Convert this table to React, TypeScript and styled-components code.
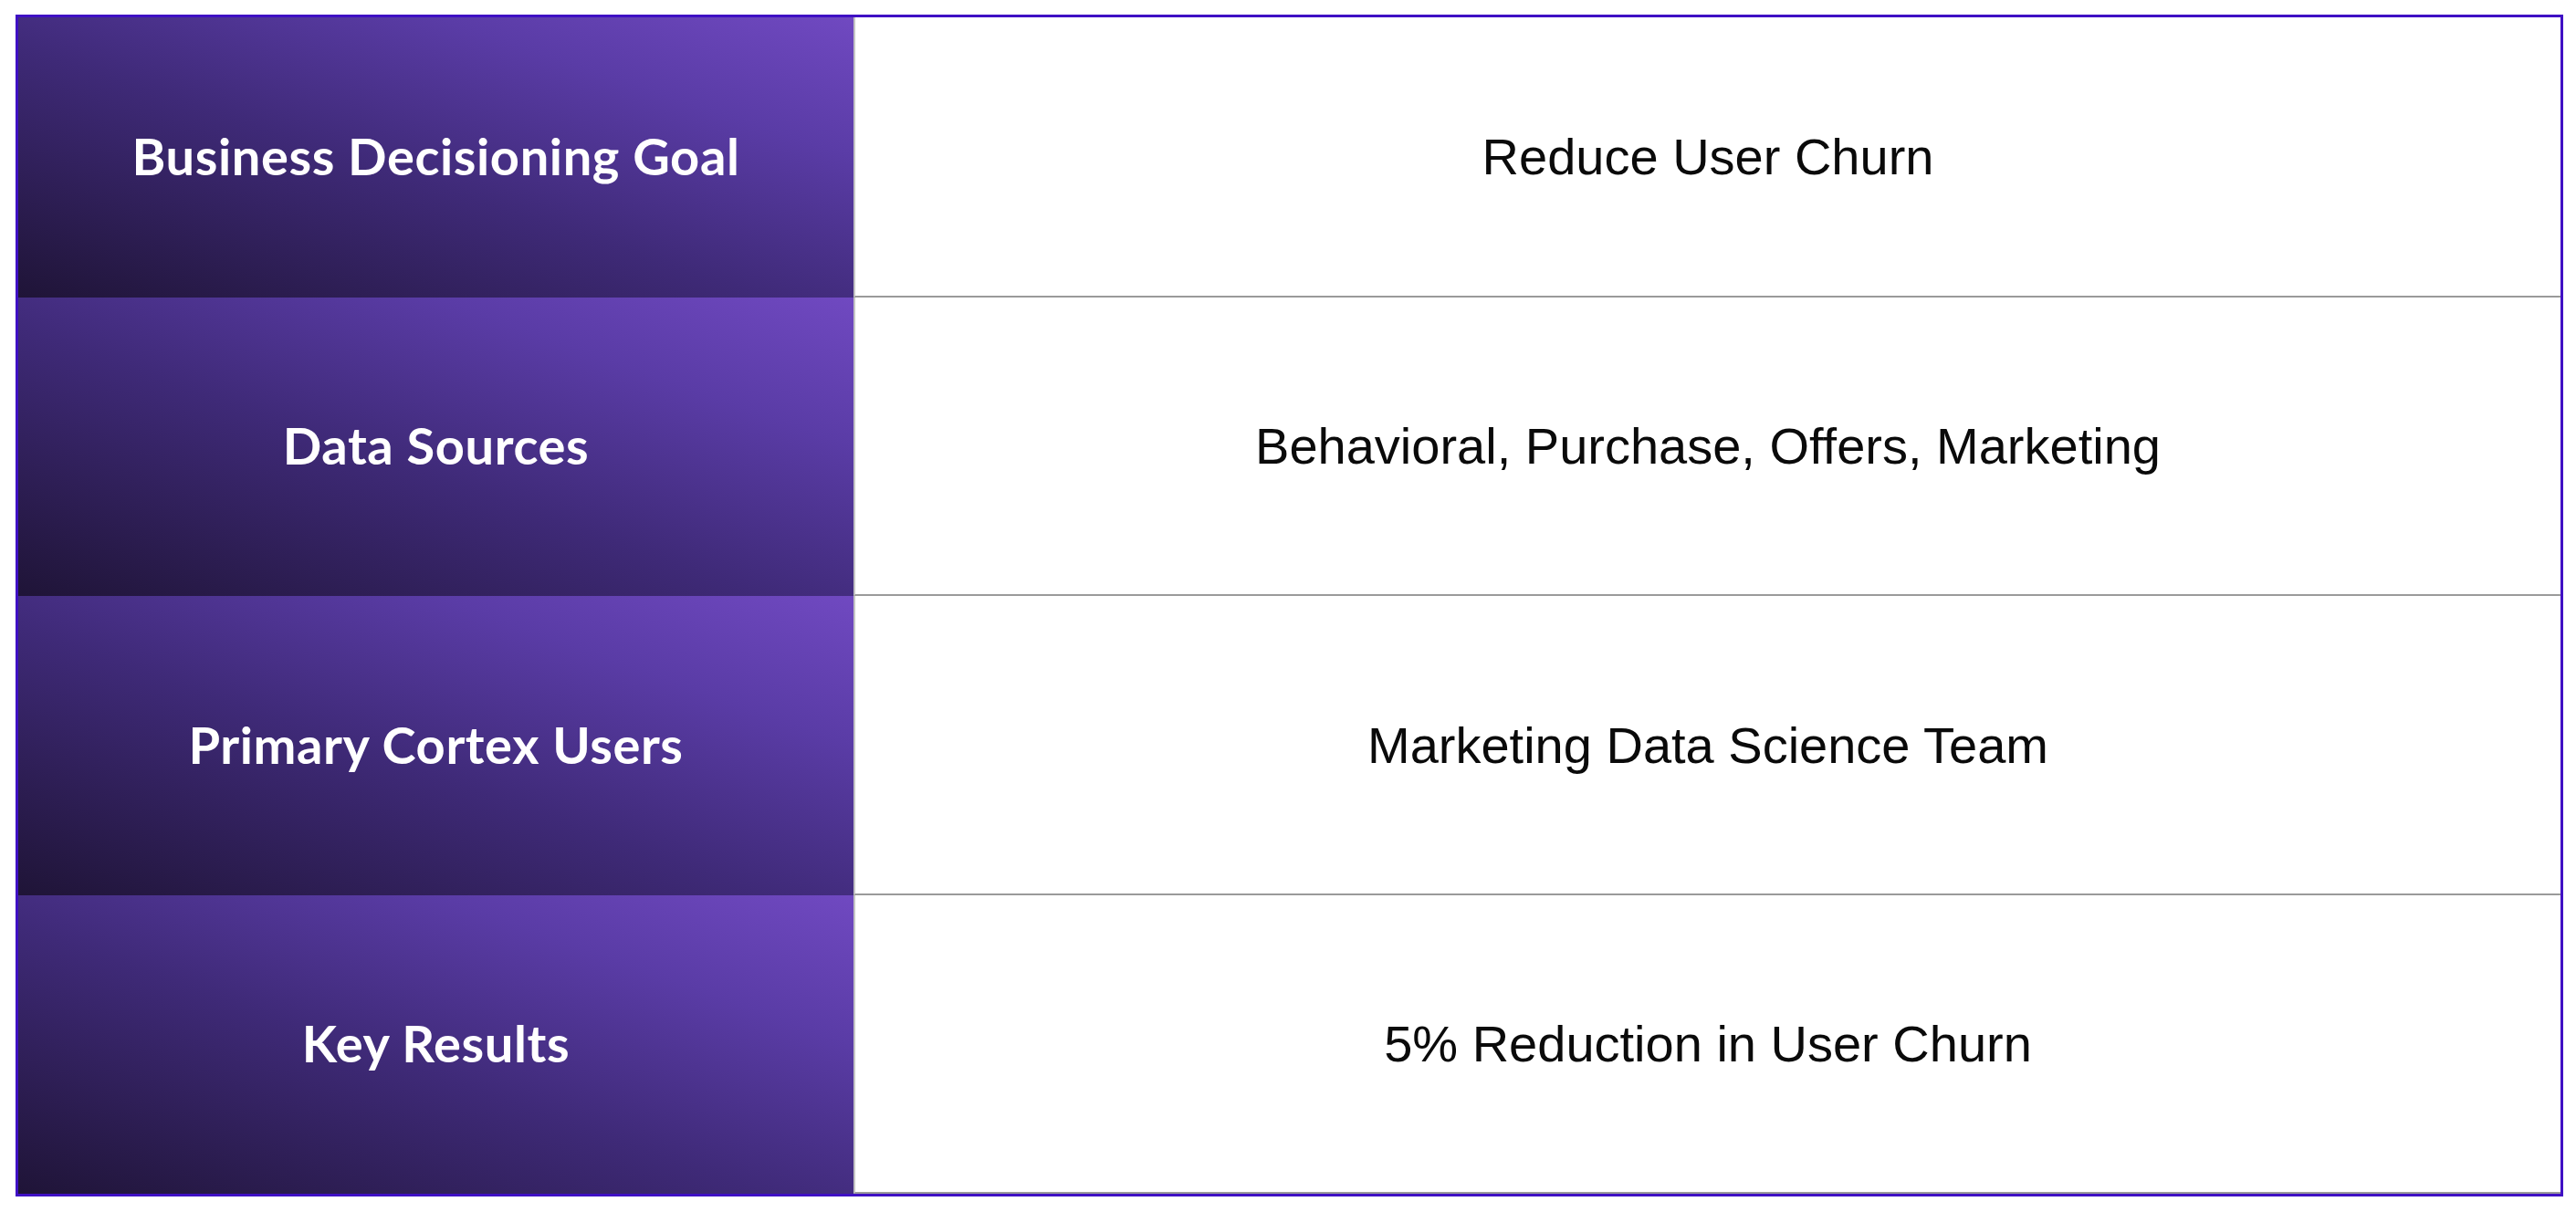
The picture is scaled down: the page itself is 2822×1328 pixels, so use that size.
import React from 'react';
import { createGlobalStyle, styled } from 'styled-components';

type Row = {
    label: string;
    value: string;
    height: number;
};

const rows: Row[] = [
    { label: 'Business Decisioning Goal', value: 'Reduce User Churn', height: 307 },
    { label: 'Data Sources', value: 'Behavioral, Purchase, Offers, Marketing', height: 327 },
    { label: 'Primary Cortex Users', value: 'Marketing Data Science Team', height: 328 },
    { label: 'Key Results', value: '5% Reduction in User Churn', height: 327 },
];

const App: React.FC = () => {
    return (
        <Page>
            <GlobalStyle />
            <Table>
                {rows.map((row) => (
                    <TableRow key={row.label} $height={row.height}>
                        <LabelCell>{row.label}</LabelCell>
                        <ValueCell>{row.value}</ValueCell>
                    </TableRow>
                ))}
            </Table>
        </Page>
    );
};

export default App;

const GlobalStyle = createGlobalStyle`
    html, body {
        margin: 0;
        background: #ffffff;
    }
`;

const Page = styled.div`
    width: 2822px;
    height: 1328px;
    padding: 16px 0 0 17px;
    box-sizing: border-box;
`;

const Table = styled.div`
    width: 2791px;
    height: 1295px;
    box-sizing: border-box;
    border: 3px solid #3f10c4;
    display: flex;
    flex-direction: column;
`;

const TableRow = styled.div<{ $height: number }>`
    display: grid;
    grid-template-columns: 915px 1fr;
    height: ${(p) => p.$height}px;
`;

const LabelCell = styled.div`
    display: flex;
    align-items: center;
    justify-content: center;
    background: linear-gradient(to top right, #1f1437 0%, #3f2a78 45%, #5a3ca6 75%, #7049c1 100%);
    color: #ffffff;
    font-family: 'Lato', 'Liberation Sans', sans-serif;
    font-weight: 700;
    font-size: 56px;
    letter-spacing: 0.6px;
    padding-bottom: 4px;
    box-sizing: border-box;
`;

const ValueCell = styled.div`
    display: flex;
    align-items: center;
    justify-content: center;
    border-left: 2px solid #c4c4c4;
    border-bottom: 2px solid #9a9a9a;
    color: #0a0a0a;
    font-family: 'Liberation Sans', Arial, sans-serif;
    font-size: 56px;
    box-sizing: border-box;
`;
